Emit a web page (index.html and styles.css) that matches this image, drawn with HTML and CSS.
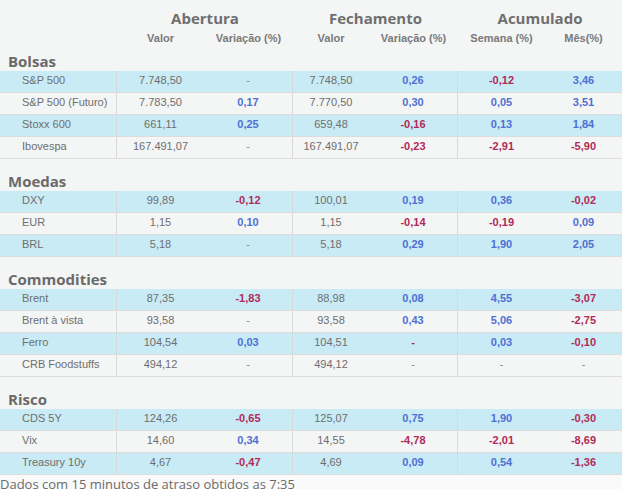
FILE: index.html
```html
<!DOCTYPE html>
<html lang="pt-BR">
<head>
<meta charset="utf-8">
<title>Mercados</title>
<link rel="stylesheet" href="styles.css">
</head>
<body>
<div class="board">
  <div class="groups">
    <div></div>
    <div class="group">Abertura</div>
    <div class="group">Fechamento</div>
    <div class="group">Acumulado</div>
  </div>
  <div class="subs">
    <div></div>
    <div>Valor</div><div>Variação (%)</div>
    <div>Valor</div><div>Variação (%)</div>
    <div>Semana (%)</div><div>Mês(%)</div>
  </div>

  <div class="section-title first">Bolsas</div>
  <div class="row"><div class="name">S&amp;P 500</div><div>7.748,50</div><div class="dash sep">-</div><div>7.748,50</div><div class="up sep">0,26</div><div class="down">-0,12</div><div class="up">3,46</div></div>
  <div class="row"><div class="name">S&amp;P 500 (Futuro)</div><div>7.783,50</div><div class="up sep">0,17</div><div>7.770,50</div><div class="up sep">0,30</div><div class="up">0,05</div><div class="up">3,51</div></div>
  <div class="row"><div class="name">Stoxx 600</div><div>661,11</div><div class="up sep">0,25</div><div>659,48</div><div class="down sep">-0,16</div><div class="up">0,13</div><div class="up">1,84</div></div>
  <div class="row"><div class="name">Ibovespa</div><div>167.491,07</div><div class="dash sep">-</div><div>167.491,07</div><div class="down sep">-0,23</div><div class="down">-2,91</div><div class="down">-5,90</div></div>

  <div class="section-title">Moedas</div>
  <div class="row"><div class="name">DXY</div><div>99,89</div><div class="down sep">-0,12</div><div>100,01</div><div class="up sep">0,19</div><div class="up">0,36</div><div class="down">-0,02</div></div>
  <div class="row"><div class="name">EUR</div><div>1,15</div><div class="up sep">0,10</div><div>1,15</div><div class="down sep">-0,14</div><div class="down">-0,19</div><div class="up">0,09</div></div>
  <div class="row"><div class="name">BRL</div><div>5,18</div><div class="dash sep">-</div><div>5,18</div><div class="up sep">0,29</div><div class="up">1,90</div><div class="up">2,05</div></div>

  <div class="section-title">Commodities</div>
  <div class="row"><div class="name">Brent</div><div>87,35</div><div class="down sep">-1,83</div><div>88,98</div><div class="up sep">0,08</div><div class="up">4,55</div><div class="down">-3,07</div></div>
  <div class="row"><div class="name">Brent à vista</div><div>93,58</div><div class="dash sep">-</div><div>93,58</div><div class="up sep">0,43</div><div class="up">5,06</div><div class="down">-2,75</div></div>
  <div class="row"><div class="name">Ferro</div><div>104,54</div><div class="up sep">0,03</div><div>104,51</div><div class="down sep">-</div><div class="up">0,03</div><div class="down">-0,10</div></div>
  <div class="row"><div class="name">CRB Foodstuffs</div><div>494,12</div><div class="dash sep">-</div><div>494,12</div><div class="dash sep">-</div><div class="dash">-</div><div class="dash">-</div></div>

  <div class="section-title">Risco</div>
  <div class="row"><div class="name">CDS 5Y</div><div>124,26</div><div class="down sep">-0,65</div><div>125,07</div><div class="up sep">0,75</div><div class="up">1,90</div><div class="down">-0,30</div></div>
  <div class="row"><div class="name">Vix</div><div>14,60</div><div class="up sep">0,34</div><div>14,55</div><div class="down sep">-4,78</div><div class="down">-2,01</div><div class="down">-8,69</div></div>
  <div class="row"><div class="name">Treasury 10y</div><div>4,67</div><div class="down sep">-0,47</div><div>4,69</div><div class="up sep">0,09</div><div class="up">0,54</div><div class="down">-1,36</div></div>
</div>
<p class="note">Dados com 15 minutos de atraso obtidos as 7:35</p>
</body>
</html>
```

FILE: styles.css
```css
* { box-sizing: border-box; }

html, body {
  margin: 0;
  padding: 0;
  background: #fafafa;
}

.board {
  width: 622px;
  background: #f4f5f5;
  font-family: "Liberation Sans", Arial, sans-serif;
  font-size: 11px;
  color: #6e6e6e;
}

.groups {
  display: grid;
  grid-template-columns: 117px 176px 165px 164px;
  height: 31px;
  padding-top: 8px;
}

.group {
  font-family: "Open Sans", sans-serif;
  font-weight: 700;
  font-size: 15px;
  line-height: 20px;
  color: #6f6f6f;
  text-align: center;
}

.subs,
.row {
  display: grid;
  grid-template-columns: 117px 87px 89px 76px 89px 87px 77px;
}

.subs > div {
  font-weight: 700;
  line-height: 14px;
  color: #7a7a7a;
  text-align: center;
}

.section-title {
  font-family: "Open Sans", sans-serif;
  font-weight: 700;
  font-size: 15px;
  line-height: 20px;
  color: #6a6a6a;
  padding: 12px 0 0 8px;
  height: 32px;
}

.section-title.first {
  padding-top: 6px;
  height: 26px;
}

.row {
  height: 22px;
  border-bottom: 1px solid #dcdcdc;
  background: #f4f5f5;
}

.section-title + .row,
.section-title + .row + .row + .row,
.section-title + .row + .row + .row + .row + .row {
  background: #c9ebf5;
}

.row > div {
  line-height: 19px;
  text-align: center;
  white-space: nowrap;
}

.row > .name {
  text-align: left;
  padding-left: 22px;
  border-right: 1px solid #d9d9d9;
}

.row > .sep {
  border-right: 1px solid #d9d9d9;
}

.up {
  color: #4f70d3;
  font-weight: 700;
}

.down {
  color: #b12a59;
  font-weight: 700;
}

.dash {
  color: #8a8a8a;
}

.note {
  margin: 0;
  font-family: "Open Sans", sans-serif;
  font-size: 13px;
  line-height: 18px;
  color: #6b6b6b;
}
```
